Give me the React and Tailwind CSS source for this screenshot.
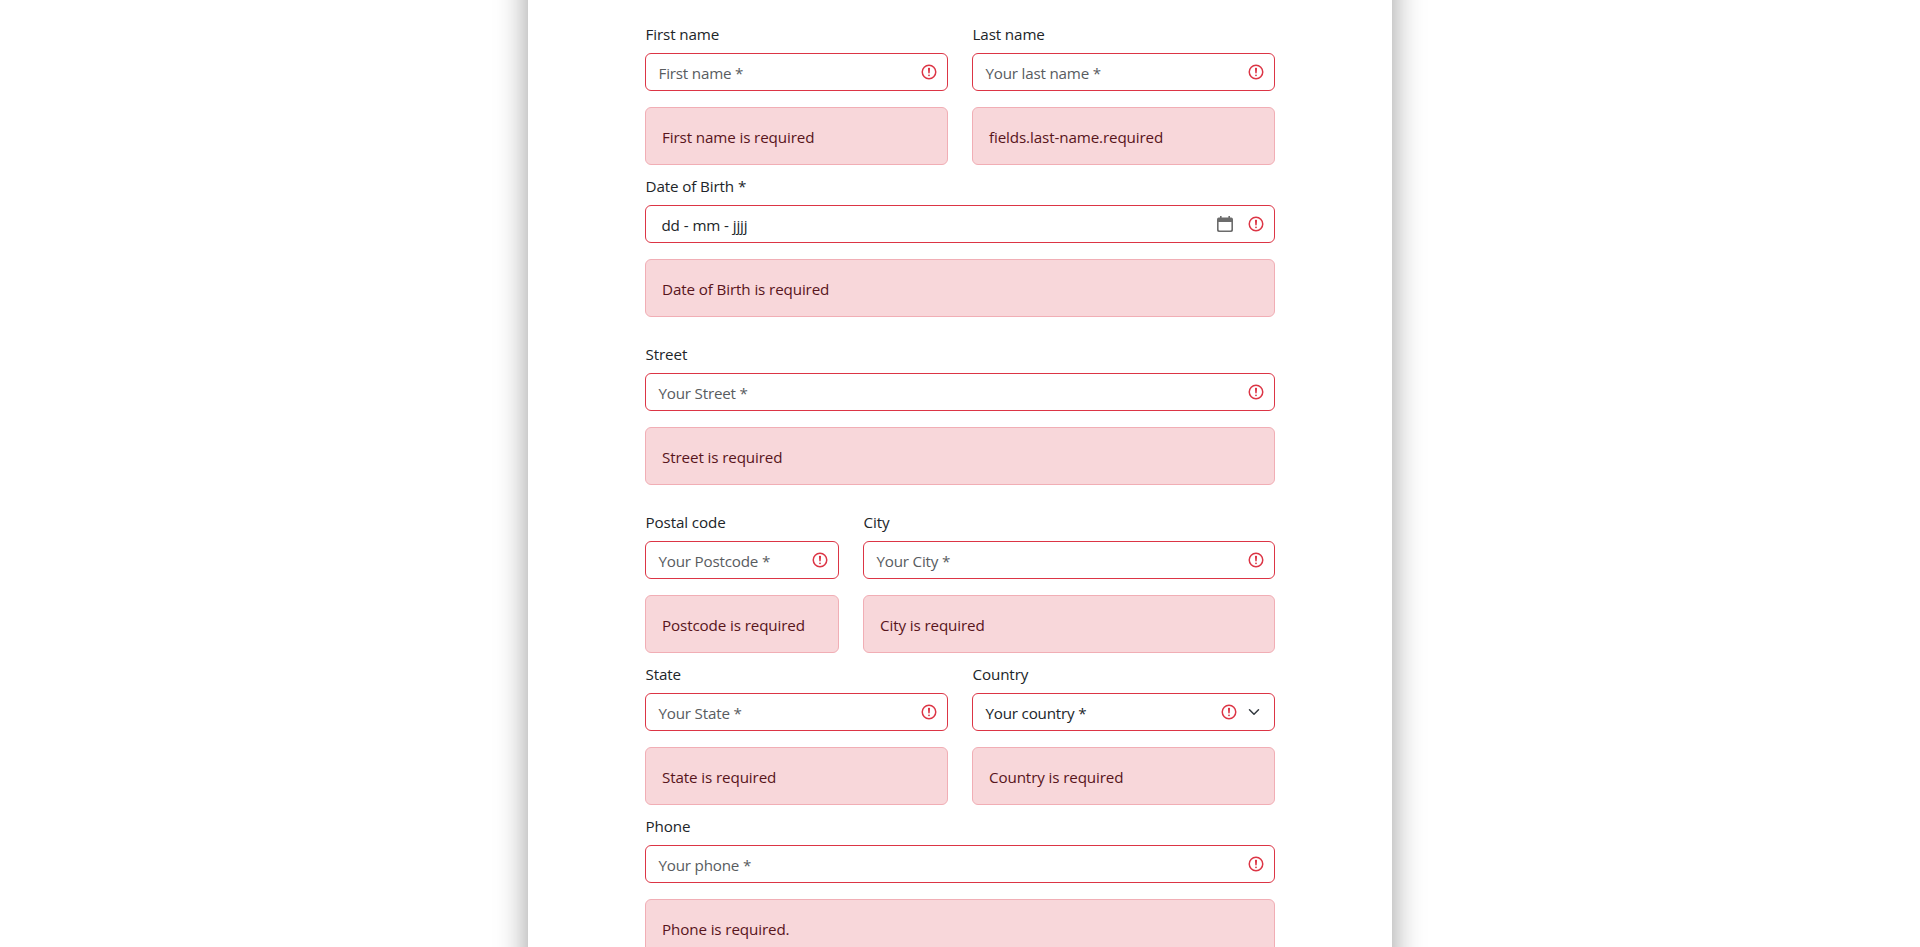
function ErrorIcon() {
  return (
    <svg viewBox="0 0 12 12" width="18" height="18" fill="none" stroke="#dc3545" className="shrink-0">
      <circle cx="6" cy="6" r="4.5" />
      <path strokeLinejoin="round" d="M5.8 3.6h.4L6 6.5z" />
      <circle cx="6" cy="8.2" r=".6" fill="#dc3545" stroke="none" />
    </svg>
  );
}

function CalendarIcon() {
  return (
    <svg viewBox="0 0 16 16" width="16" height="16" className="mr-[14px] shrink-0">
      <path
        fill="#6c6c6c"
        fillRule="evenodd"
        d="M3 0h1.6v1.6h6.8V0H13v1.6h1.2A1.8 1.8 0 0 1 16 3.4v10.8a1.8 1.8 0 0 1-1.8 1.8H1.8A1.8 1.8 0 0 1 0 14.2V3.4a1.8 1.8 0 0 1 1.8-1.8H3zM1.6 6v7.6c0 .5.4.8.8.8h11.2c.4 0 .8-.3.8-.8V6z"
      />
    </svg>
  );
}

function Chevron() {
  return (
    <svg viewBox="0 0 16 16" width="16" height="12" fill="none" stroke="#343a40" className="ml-2 mr-[3px] shrink-0">
      <path strokeLinecap="round" strokeLinejoin="round" strokeWidth="2" d="m2 5 6 6 6-6" />
    </svg>
  );
}

function Field({ label, text, error, kind = 'text', className = '' }) {
  const color = kind === 'text' ? 'text-[#595c5f]' : 'text-[#212529]';
  return (
    <div className={className}>
      <div className="mb-2 h-6 pl-[0.5px] pt-px leading-6">{label}</div>
      <div className="flex h-[38px] items-center rounded-md border border-[#dc3545] bg-white pl-3 pr-[9px]">
        <div className={`flex-1 whitespace-pre pl-[0.5px] pt-[2px] leading-6 tracking-[-0.2px] ${color}`}>
          {kind === 'date' ? (
            <span className="ml-[3px] flex gap-[4px]">
              <span>dd</span>
              <span>-</span>
              <span>mm</span>
              <span>-</span>
              <span>jjjj</span>
            </span>
          ) : (
            text
          )}
        </div>
        {kind === 'date' && <CalendarIcon />}
        <ErrorIcon />
        {kind === 'select' && <Chevron />}
      </div>
      <div className="mt-4 mb-2 h-[58px] rounded-md border border-[#f1aeb5] bg-[#f8d7da] px-4 pt-[17px] leading-6 text-[#58151c]">
        {error}
      </div>
    </div>
  );
}

export default function App() {
  return (
    <div className="flex h-[947px] items-center justify-center overflow-hidden bg-white font-['Open_Sans','Noto_Sans',sans-serif] text-[15.2px] tracking-[-0.12px] text-[#212529]">
      <main className="h-[1047px] w-[864px] shrink-0 bg-white px-[117px] pt-[71px] shadow-[0_0_30px_rgba(0,0,0,0.4)]">
        <div className="grid grid-cols-12 gap-x-6">
          <Field className="col-span-6" label="First name" text="First name *" error="First name is required" />
          <Field className="col-span-6" label="Last name" text="Your last name *" error="fields.last-name.required" />
          <Field className="col-span-12 mb-4" kind="date" label="Date of Birth *" error="Date of Birth is required" />
          <Field className="col-span-12 mb-4" label="Street" text="Your Street *" error="Street is required" />
          <Field className="col-span-4" label="Postal code" text="Your Postcode *" error="Postcode is required" />
          <Field className="col-span-8" label="City" text="Your City *" error="City is required" />
          <Field className="col-span-6" label="State" text="Your State *" error="State is required" />
          <Field className="col-span-6" kind="select" label="Country" text="Your country *" error="Country is required" />
          <Field className="col-span-12" label="Phone" text="Your phone *" error="Phone is required." />
        </div>
      </main>
    </div>
  );
}
